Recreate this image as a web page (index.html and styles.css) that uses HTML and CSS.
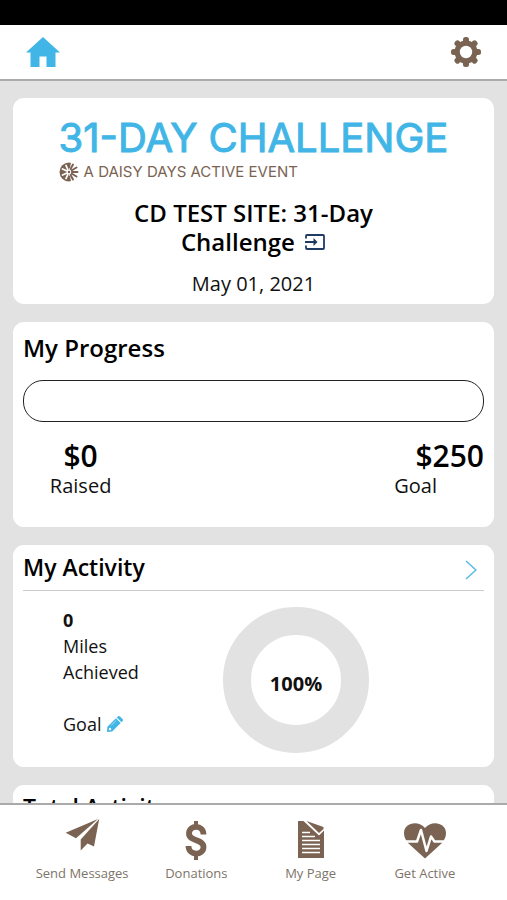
FILE: index.html
```
<!DOCTYPE html>
<html lang="en">
<head>
<meta charset="utf-8">
<meta name="viewport" content="width=device-width, initial-scale=1">
<title>31-Day Challenge</title>
<link rel="stylesheet" href="styles.css">
</head>
<body>
<div class="status-bar"></div>
<header class="top-bar">
  <a class="icon-link" href="#home" aria-label="Home">
    <svg width="34" height="30" viewBox="0 0 34 30"><path fill="#41b6e6" d="M17 0 34 15.500H29.500V30H20.500V19.500H13.500V30H4.500V15.500H0Z"/></svg>
  </a>
  <button class="icon-link" type="button" aria-label="Settings">
    <svg width="30" height="30" viewBox="-15 -15 30 30">
      <g fill="#7a6352">
        <rect x="-3" y="-15" width="6" height="30" rx="2.500"/><rect x="-15" y="-3" width="30" height="6" rx="2.500"/>
        <g transform="rotate(45)"><rect x="-3" y="-15" width="6" height="30" rx="2.500"/><rect x="-15" y="-3" width="30" height="6" rx="2.500"/></g>
        <circle r="11.500"/>
      </g>
      <circle r="6.200" fill="#fff"/>
    </svg>
  </button>
</header>

<main class="content">
  <section class="card event">
    <div class="logo">
      <div class="logo-title">31-DAY CHALLENGE</div>
      <div class="logo-sub">
        <svg width="20" height="20" viewBox="-10 -10 20 20">
          <path fill="#7a6352" d="M0-9.500A9.500 9.500 0 0 0 0 9.500Z"/>
          <g stroke="#fff" stroke-width="1.800" stroke-linecap="round"><path d="M-2-1-6.500-3M-2 1-6.500 3M-1-2-3-6.500M-1 2-3 6.500"/></g>
          <g stroke="#7a6352" stroke-width="2" stroke-linecap="round"><path d="M3 0H8.500M2.500-1.500 7.500-4.500M2.500 1.500 7.500 4.500M1.500-3 4-7.500M1.500 3 4 7.500"/></g>
          <path fill="#7a6352" d="M0-9.500 2-9 .8-4H0ZM0 9.500 2 9 .8 4H0Z"/>
          <circle r="2.200" fill="#fff"/><circle r="1.200" fill="#7a6352"/>
        </svg>
        <span>A DAISY DAYS ACTIVE EVENT</span>
      </div>
    </div>
    <h1 class="event-name">CD TEST SITE: 31-Day Challenge
      <a href="#site" aria-label="Open site"><svg width="22" height="18" viewBox="0 0 22 18"><path fill="none" stroke="#1f3a63" stroke-width="1.800" d="M2 5.500V3Q2 2 3 2H19Q20 2 20 3V15Q20 16 19 16H3Q2 16 2 15V12.500M1 9H12"/><path fill="#1f3a63" d="M9.500 5 13.500 9 9.500 13Z"/></svg></a>
    </h1>
    <p class="event-date">May 01, 2021</p>
  </section>

  <section class="card progress">
    <h2>My Progress</h2>
    <div class="bar" role="progressbar" aria-label="Raised" aria-valuenow="0" aria-valuemin="0" aria-valuemax="250"></div>
    <div class="totals">
      <div class="raised"><strong>$0</strong><span>Raised</span></div>
      <div class="goal"><strong>$250</strong><span>Goal</span></div>
    </div>
  </section>

  <section class="card">
    <div class="card-head">
      <h2>My Activity</h2>
      <a class="more" href="#activity" aria-label="Open my activity"><svg width="12" height="20" viewBox="0 0 12 20"><path fill="none" stroke="#58b9e8" stroke-width="1.500" d="M1 1 11 10 1 19"/></svg></a>
    </div>
    <div class="activity">
      <div class="stats">
        <strong>0</strong>
        <span>Miles</span>
        <span>Achieved</span>
        <a class="edit-goal" href="#goal">Goal
          <svg width="16" height="16" viewBox="0 0 16 16"><path fill="#41b6e6" d="M0 16 .4 10.800 8.900 2.300 13.700 7.100 5.200 15.600ZM9.700 1.500 10.800.5Q12-.5 13 .5L15.500 3Q16.500 4 15.500 5.200L14.500 6.300Z"/><path stroke="#a5dcf3" d="M4 9.500 9 4.500"/><circle cx="3" cy="13" r="1.200" fill="#fff"/></svg>
        </a>
      </div>
      <div class="donut">100%</div>
    </div>
  </section>

  <section class="card">
    <div class="card-head"><h2>Total Activity</h2></div>
  </section>
</main>

<nav class="tabs">
  <a href="#messages">
    <svg width="36" height="42" viewBox="0 0 36 42"><path fill="#7a6352" d="M34 0 1.700 13.700 12 19.300ZM35.200 0 30 27.500 23.500 24.500 16.700 31.500V20.500Z"/></svg>
    <span>Send Messages</span>
  </a>
  <a href="#donations">
    <svg width="24" height="42" viewBox="0 0 24 42"><path fill="none" stroke="#7a6352" stroke-width="5.800" d="M19.500 15.500C19.500 5.500 5 5.500 5 14.500C5 23 19.500 19.500 19.500 28C19.500 37 4.500 37 4.500 27"/><path stroke="#7a6352" stroke-width="4" d="M12 2V9M12 34V41"/></svg>
    <span>Donations</span>
  </a>
  <a href="#page">
    <svg width="28" height="42" viewBox="0 0 28 42"><path fill="#7a6352" d="M1 2H6.500L22 16.500 27 11.500V39H1ZM9.500 2 26.500 8V10L22 14Z"/><path stroke="#fff" stroke-width="1.500" d="M5 13.500H13M5 17.500H18M5 21.500H23M5 25.500H23M5 29.500H23M5 33.500H23"/></svg>
    <span>My Page</span>
  </a>
  <a href="#active">
    <svg width="44" height="42" viewBox="0 0 44 42"><path fill="#7a6352" d="M22 39.500 5 24Q1 19 1 14C1 3 16 1 22 9C28 1 43 3 43 14Q43 19 39 24Z"/><path fill="none" stroke="#fff" stroke-width="2.500" stroke-linejoin="round" d="M2 22.500H14L18 11 23.500 32 28 17.500 31.500 22.500H42"/></svg>
    <span>Get Active</span>
  </a>
</nav>
</body>
</html>
```
FILE: styles.css
```
* { box-sizing: border-box; }

body {
  margin: 0;
  height: 100vh;
  display: flex;
  flex-direction: column;
  background: #e2e2e2;
  color: #111;
  font-family: "Open Sans", "Noto Sans", sans-serif;
}

h1, h2, p { margin: 0; }
h1, h2 { font-size: 24px; font-weight: 600; color: #000; }
svg { display: block; }
a { color: inherit; text-decoration: none; }

.status-bar { flex: none; height: 25px; background: #000; }

.top-bar {
  flex: none;
  height: 56px;
  padding: 0 26px;
  display: flex;
  align-items: center;
  justify-content: space-between;
  background: #fff;
  border-bottom: 2px solid #aaa;
}

.icon-link { padding: 0; border: 0; background: none; }

.content {
  flex: 1;
  min-height: 0;
  overflow: hidden;
  padding: 17px 13px;
  display: flex;
  flex-direction: column;
  gap: 18px;
}

.card {
  flex: none;
  padding: 6px 10px 14px;
  background: #fff;
  border-radius: 11px;
}

.card h2 { line-height: 32px; }

.event { padding: 20px 10px 6px; text-align: center; }

.logo { width: fit-content; margin: 0 auto; text-align: left; }

.logo-title {
  color: #41b6e6;
  font-family: Inter, sans-serif;
  font-size: 40px;
  line-height: 40px;
  white-space: nowrap;
  -webkit-text-stroke: 1px #41b6e6;
}

.logo-sub {
  display: flex;
  align-items: center;
  gap: 5px;
  color: #7a6352;
  font-family: Inter, sans-serif;
  font-size: 15px;
  font-weight: 400;
  line-height: 28px;
}

.event-name {
  max-width: 300px;
  margin: 12px auto 14px;
  line-height: 29px;
}

.event-name a { display: inline-block; margin-left: 3px; }
.event-date { font-size: 20px; line-height: 28px; }

.progress { padding: 10px 10px 27px; }

.bar {
  height: 42px;
  margin: 16px 0 18px;
  border: 1px solid #222;
  border-radius: 20px;
}

.totals { display: flex; justify-content: space-between; }
.totals strong, .totals span { display: block; }
.totals strong { font-size: 30px; font-weight: 600; line-height: 32px; color: #000; }
.totals span { font-size: 20px; line-height: 28px; }
.raised { width: 25%; text-align: center; }
.goal { text-align: right; }
.goal span { padding-right: 47px; }

.card-head {
  display: flex;
  align-items: center;
  justify-content: space-between;
  padding-bottom: 7px;
  border-bottom: 1px solid #ccc;
}

.card-head h2 { font-size: 23px; }

.more { padding: 6px 7px 0 0; }

.activity { display: flex; align-items: flex-start; padding-top: 16px; }

.stats {
  width: 200px;
  padding-left: 40px;
  display: flex;
  flex-direction: column;
  font-size: 18px;
  line-height: 26px;
}

.edit-goal { display: flex; align-items: center; gap: 6px; margin-top: 26px; }

.donut {
  width: 146px;
  height: 146px;
  display: grid;
  place-items: center;
  padding-top: 6px;
  border: 28px solid #e2e2e2;
  border-radius: 50%;
  font-size: 20px;
  font-weight: 700;
}

.tabs {
  flex: none;
  padding: 14px 25px 17px;
  display: grid;
  grid-template-columns: repeat(4, 1fr);
  background: #fff;
  border-top: 2px solid #aaa;
}

.tabs a {
  display: flex;
  flex-direction: column;
  align-items: center;
  gap: 2px;
  color: #7d7468;
  font-size: 13px;
  line-height: 20px;
  white-space: nowrap;
}
```
